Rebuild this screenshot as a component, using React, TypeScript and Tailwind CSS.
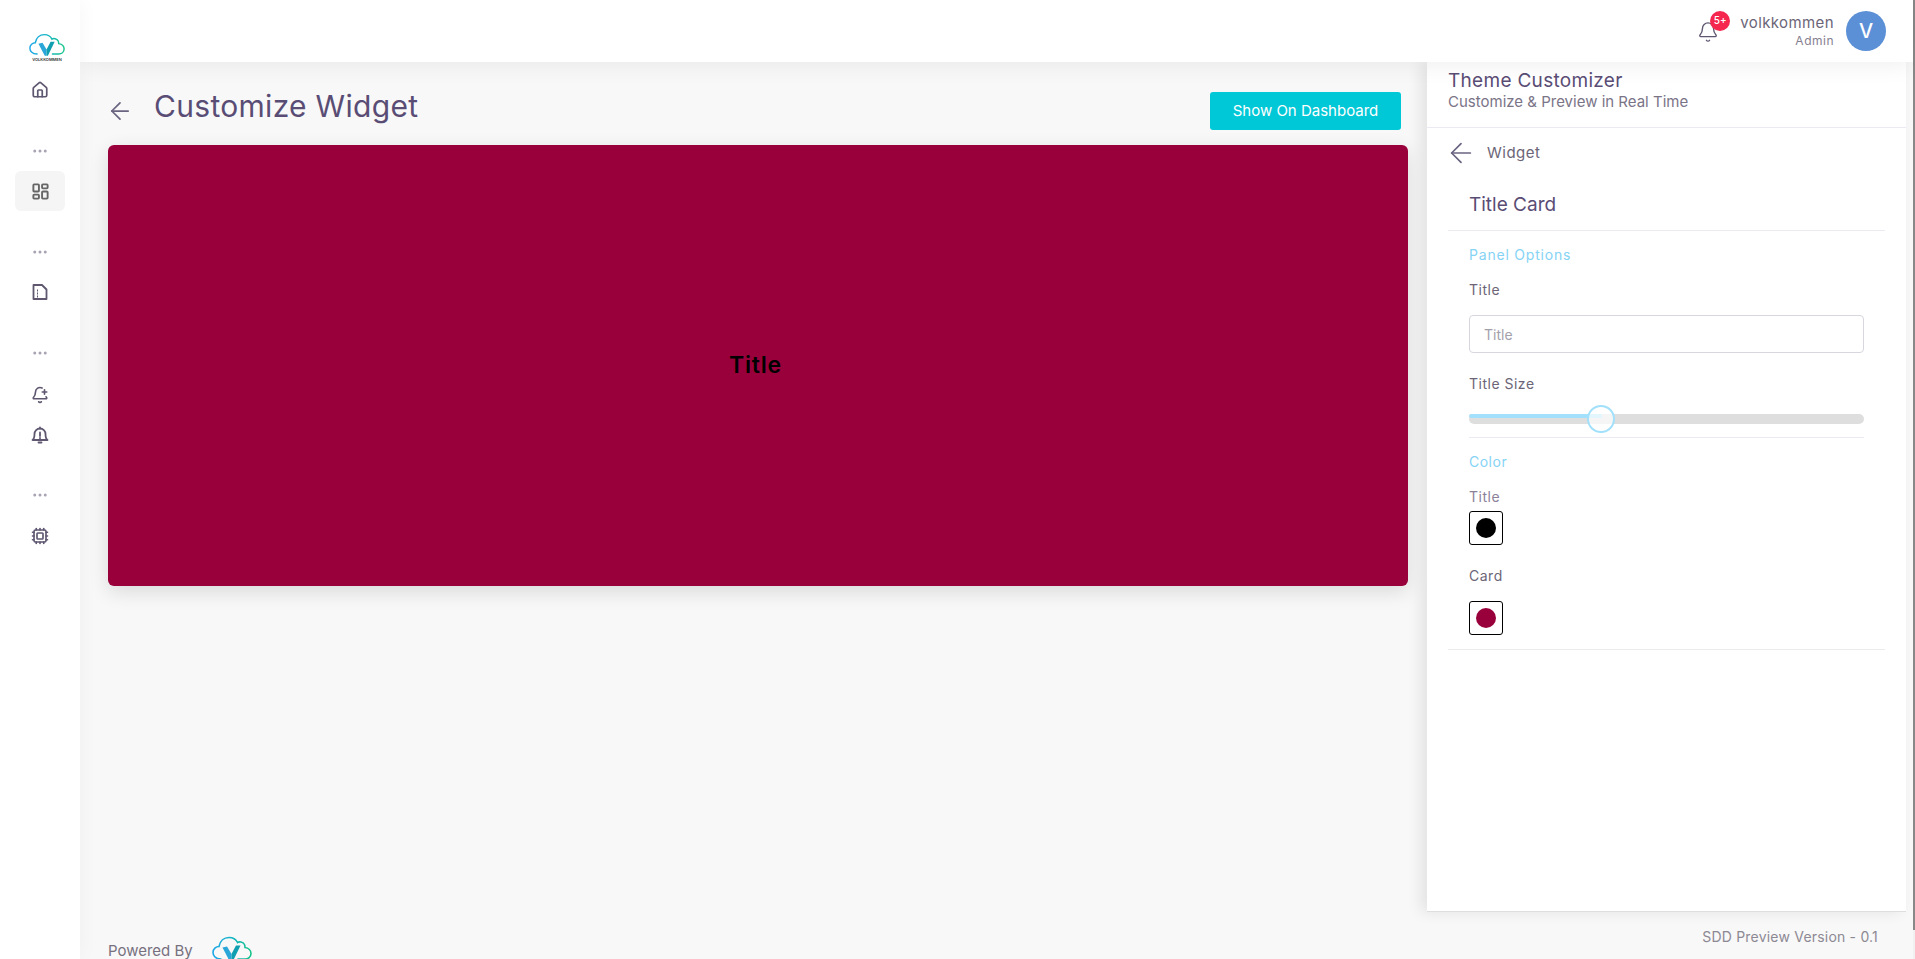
import React from 'react';
import { ArrowLeft, Bell, BellPlus, Cpu, Home, LayoutDashboard, MoreHorizontal } from 'lucide-react';

const font = "font-['Inter','Noto_Sans',sans-serif]";

const CloudLogo = ({ className }: { className?: string }) => (
  <svg viewBox="0 0 40 26" className={className} fill="none">
    <defs>
      <linearGradient id="cloud" x1="0" x2="1" y1="0" y2="0">
        <stop offset="0" stopColor="#1ea7e8" />
        <stop offset="0.5" stopColor="#16b5c4" />
        <stop offset="1" stopColor="#17c48a" />
      </linearGradient>
    </defs>
    <path
      d="M9 23 C3 23 1 19 1 16.500 C1 13 4 10.500 7 10.500 C8 5 12 1.500 17 1.500 C21 1.500 24 3.500 25.500 6.500 C27 5.500 31 5.500 32.500 8.500 C33 10 33 11 33 11.500 C36.500 12 39 14.500 39 17.500 C39 21 36 23 33 23 L26 23"
      stroke="url(#cloud)"
      strokeWidth="1.600"
      strokeLinecap="round"
    />
    <path d="M10.500 11.500 L15 10.500 L19.500 18 L19.500 25 L17.500 25 Z" fill="#2aa7d8" />
    <path d="M19.500 18 L24 9.500 L28.500 9.500 L21 25 L19.500 25 Z" fill="#0f9fb0" />
  </svg>
);

const Dots = () => (
  <div className="flex justify-center text-[#a8a4b4]">
    <MoreHorizontal size={18} strokeWidth={2} />
  </div>
);

const NavIcon = ({ children, active }: { children: React.ReactNode; active?: boolean }) => (
  <div className={`mx-[15px] flex h-10 items-center justify-center rounded-md text-[#5f5770] ${active ? 'bg-[#f5f5f5]' : ''}`}>
    {children}
  </div>
);

const Sidebar = () => (
  <div className="relative z-30 flex w-20 shrink-0 flex-col bg-white shadow-[0_0_20px_rgba(0,0,0,0.04)]">
    <div className="flex h-[62px] flex-col items-center justify-end pl-[14px]">
      <CloudLogo className="h-6 w-9" />
      <div className="text-[4px] leading-[5px] font-semibold text-[#333]">VOLKKOMMEN</div>
    </div>
    <div className="mt-[8px]">
      <NavIcon><Home size={18} strokeWidth={2.300} /></NavIcon>
    </div>
    <div className="mt-[32px]"><Dots /></div>
    <div className="mt-[11px]">
      <NavIcon active><LayoutDashboard size={19} strokeWidth={2.400} className="text-[#666666]" /></NavIcon>
    </div>
    <div className="mt-[32px]"><Dots /></div>
    <div className="mt-[11px]">
      <NavIcon>
        <svg width="18" height="18" viewBox="0 0 18 18" fill="none" stroke="currentColor" strokeWidth="1.800" strokeLinejoin="round">
          <path d="M2.500 2h8.500l4.500 4.500v9.500h-13z" />
          <path d="M6 7.500h1M6 10.500h1M6 13.500h1" />
        </svg>
      </NavIcon>
    </div>
    <div className="mt-[32px]"><Dots /></div>
    <div className="mt-[13px]">
      <NavIcon><BellPlus size={18} strokeWidth={2.200} /></NavIcon>
    </div>
    <NavIcon>
      <svg width="18" height="18" viewBox="0 0 18 18" fill="none" stroke="currentColor" strokeWidth="1.800" strokeLinejoin="round" strokeLinecap="round">
        <path d="M1.500 14h15c-1.500-1-2-2-2-6 0-3-2.500-5.500-5.500-5.500S3.500 5 3.500 8c0 4-.5 5-2 6z" />
        <path d="M9 1.500v1M9 6.500v3.500M9 12v.2M7.500 16.500h3" />
      </svg>
    </NavIcon>
    <div className="mt-[31px]"><Dots /></div>
    <div className="mt-[12px]">
      <NavIcon><Cpu size={18} strokeWidth={2.200} /></NavIcon>
    </div>
  </div>
);

const Header = () => (
  <div className="relative z-20 flex h-[62px] shrink-0 items-center justify-end bg-white pr-[27px] shadow-[0_2px_24px_rgba(0,0,0,0.07)]">
    <div className="relative mr-[21px] mt-[1px] text-[#5f5770]">
      <Bell size={22} strokeWidth={1.500} />
      <span className="absolute -top-[10px] left-[13px] flex h-5 w-5 items-center justify-center rounded-full bg-[#f5274e] text-[10px] font-medium text-white">5+</span>
    </div>
    <div className="mr-[12px] mb-[2px] text-right">
      <div className="text-[15px] leading-[19px] tracking-[0.4px] text-[#6b6577]">volkkommen</div>
      <div className="mt-[2px] text-[12px] leading-[14px] tracking-[0.5px] text-[#85808f]">Admin</div>
    </div>
    <div className="flex h-10 w-10 items-center justify-center rounded-full bg-[#5b8fd6] text-[20px] font-medium text-white">V</div>
  </div>
);

const WidgetPreview = () => (
  <div className="min-w-0 flex-1 pr-[19px] pl-7">
    <div className="flex h-[83px] items-center">
      <ArrowLeft size={28} strokeWidth={1.500} className="-ml-[2px] mt-[15px] text-[#6b6480]" />
      <h1 className="ml-[20px] mt-[6px] text-[30px] tracking-[0.3px] text-[#5a4d75]">Customize Widget</h1>
      <button className="ml-auto mr-[7px] mt-[14px] h-[38px] w-[191px] rounded-[3px] bg-[#00c8d7] pt-[2px] text-[15px] text-white">Show On Dashboard</button>
    </div>
    <div className="flex h-[441px] items-center justify-center rounded-md bg-[#99003b] pr-[5px] pb-[1px] shadow-[0_6px_20px_rgba(0,0,0,0.12)]">
      <span className="text-[23px] font-semibold tracking-[0.8px] text-black">Title</span>
    </div>
  </div>
);

const Swatch = ({ className }: { className: string }) => (
  <div className="flex h-[34px] w-[34px] items-center justify-center rounded-[3px] border border-black">
    <div className={`h-5 w-5 rounded-full ${className}`} />
  </div>
);

const Customizer = () => (
  <div className="w-[479px] shrink-0 border-b border-[#dedede] bg-white shadow-[-6px_0_14px_rgba(0,0,0,0.09)]">
    <div className="h-[66px] border-b border-[#ebe9f1] pl-[21px] pt-[7px]">
      <div className="text-[19px] leading-[24px] tracking-[0.3px] text-[#5a4d75]">Theme Customizer</div>
      <div className="text-[15px] leading-[18px] text-[#7a7487]">Customize &amp; Preview in Real Time</div>
    </div>
    <div className="mr-[21px] ml-[21px]">
      <div className="flex h-[50px] items-center">
        <ArrowLeft size={32} strokeWidth={1.300} className="-ml-[3px] text-[#6b6480]" />
        <span className="ml-[10px] mt-[1px] text-[15px] tracking-[0.5px] text-[#6b6577]">Widget</span>
      </div>
      <div className="flex h-[53px] items-center border-b border-[#ebe9f1] pt-[2px] pl-[21px] text-[19px] text-[#5a4d75]">Title Card</div>
      <div className="px-[21px]">
        <div className="mt-[14px] text-[14px] leading-[20px] tracking-[0.8px] text-[#85d3f5]">Panel Options</div>
        <div className="mt-[15px] text-[14px] leading-[20px] tracking-[0.5px] text-[#6b6577]">Title</div>
        <input
          readOnly
          placeholder="Title"
          className="mt-[15px] h-[38px] w-full rounded-[4px] border border-[#d8d6de] px-[14px] text-[14px] outline-none placeholder:text-[#a3a0ac]"
        />
        <div className="mt-[21px] text-[14px] leading-[20px] tracking-[0.5px] text-[#6b6577]">Title Size</div>
        <div className="relative mt-[20px] h-[10px] rounded-full bg-[#dedede]">
          <div className="h-1 w-[133px] rounded-l-full bg-[#a2e0fb]" />
          <div className="absolute -top-[9px] left-[118px] h-7 w-7 rounded-full border-2 border-[#a2e0fb] bg-white/70" />
        </div>
        <div className="mt-[13px] border-b border-[#ebe9f1]" />
        <div className="mt-[14px] text-[14px] leading-[20px] tracking-[0.5px] text-[#85d3f5]">Color</div>
        <div className="mt-[15px] text-[14px] leading-[20px] tracking-[0.5px] text-[#8b8199]">Title</div>
        <div className="mt-[4px]"><Swatch className="bg-black" /></div>
        <div className="mt-[21px] text-[14px] leading-[20px] tracking-[0.5px] text-[#6b6577]">Card</div>
        <div className="mt-[15px]"><Swatch className="bg-[#99003b]" /></div>
      </div>
      <div className="mt-[14px] border-b border-[#ebebeb]" />
    </div>
  </div>
);

const Footer = () => (
  <div className="flex h-[47px] shrink-0 overflow-hidden pl-7">
    <div className="mt-[20px] flex items-start">
      <span className="mt-[8px] text-[15px] text-[#77717f]">Powered By</span>
      <CloudLogo className="ml-[19px] mt-[2px] h-[30px] w-10" />
    </div>
    <div className="mt-[14px] ml-auto mr-[35px] text-[14px] tracking-[0.2px] text-[#8d8994]">SDD Preview Version - 0.1</div>
  </div>
);

export default function App() {
  return (
    <div className={`flex h-screen overflow-hidden bg-[#f8f8f8] ${font}`}>
      <Sidebar />
      <div className="flex min-w-0 flex-1 flex-col">
        <Header />
        <div className="flex min-h-0 flex-1 pr-[7px]">
          <WidgetPreview />
          <Customizer />
        </div>
        <Footer />
      </div>
      {/* thin page scrollbar */}
      <div className="w-[2px] shrink-0 bg-[#f1f1f1]">
        <div className="h-[930px] bg-[#888888]" />
      </div>
    </div>
  );
}
